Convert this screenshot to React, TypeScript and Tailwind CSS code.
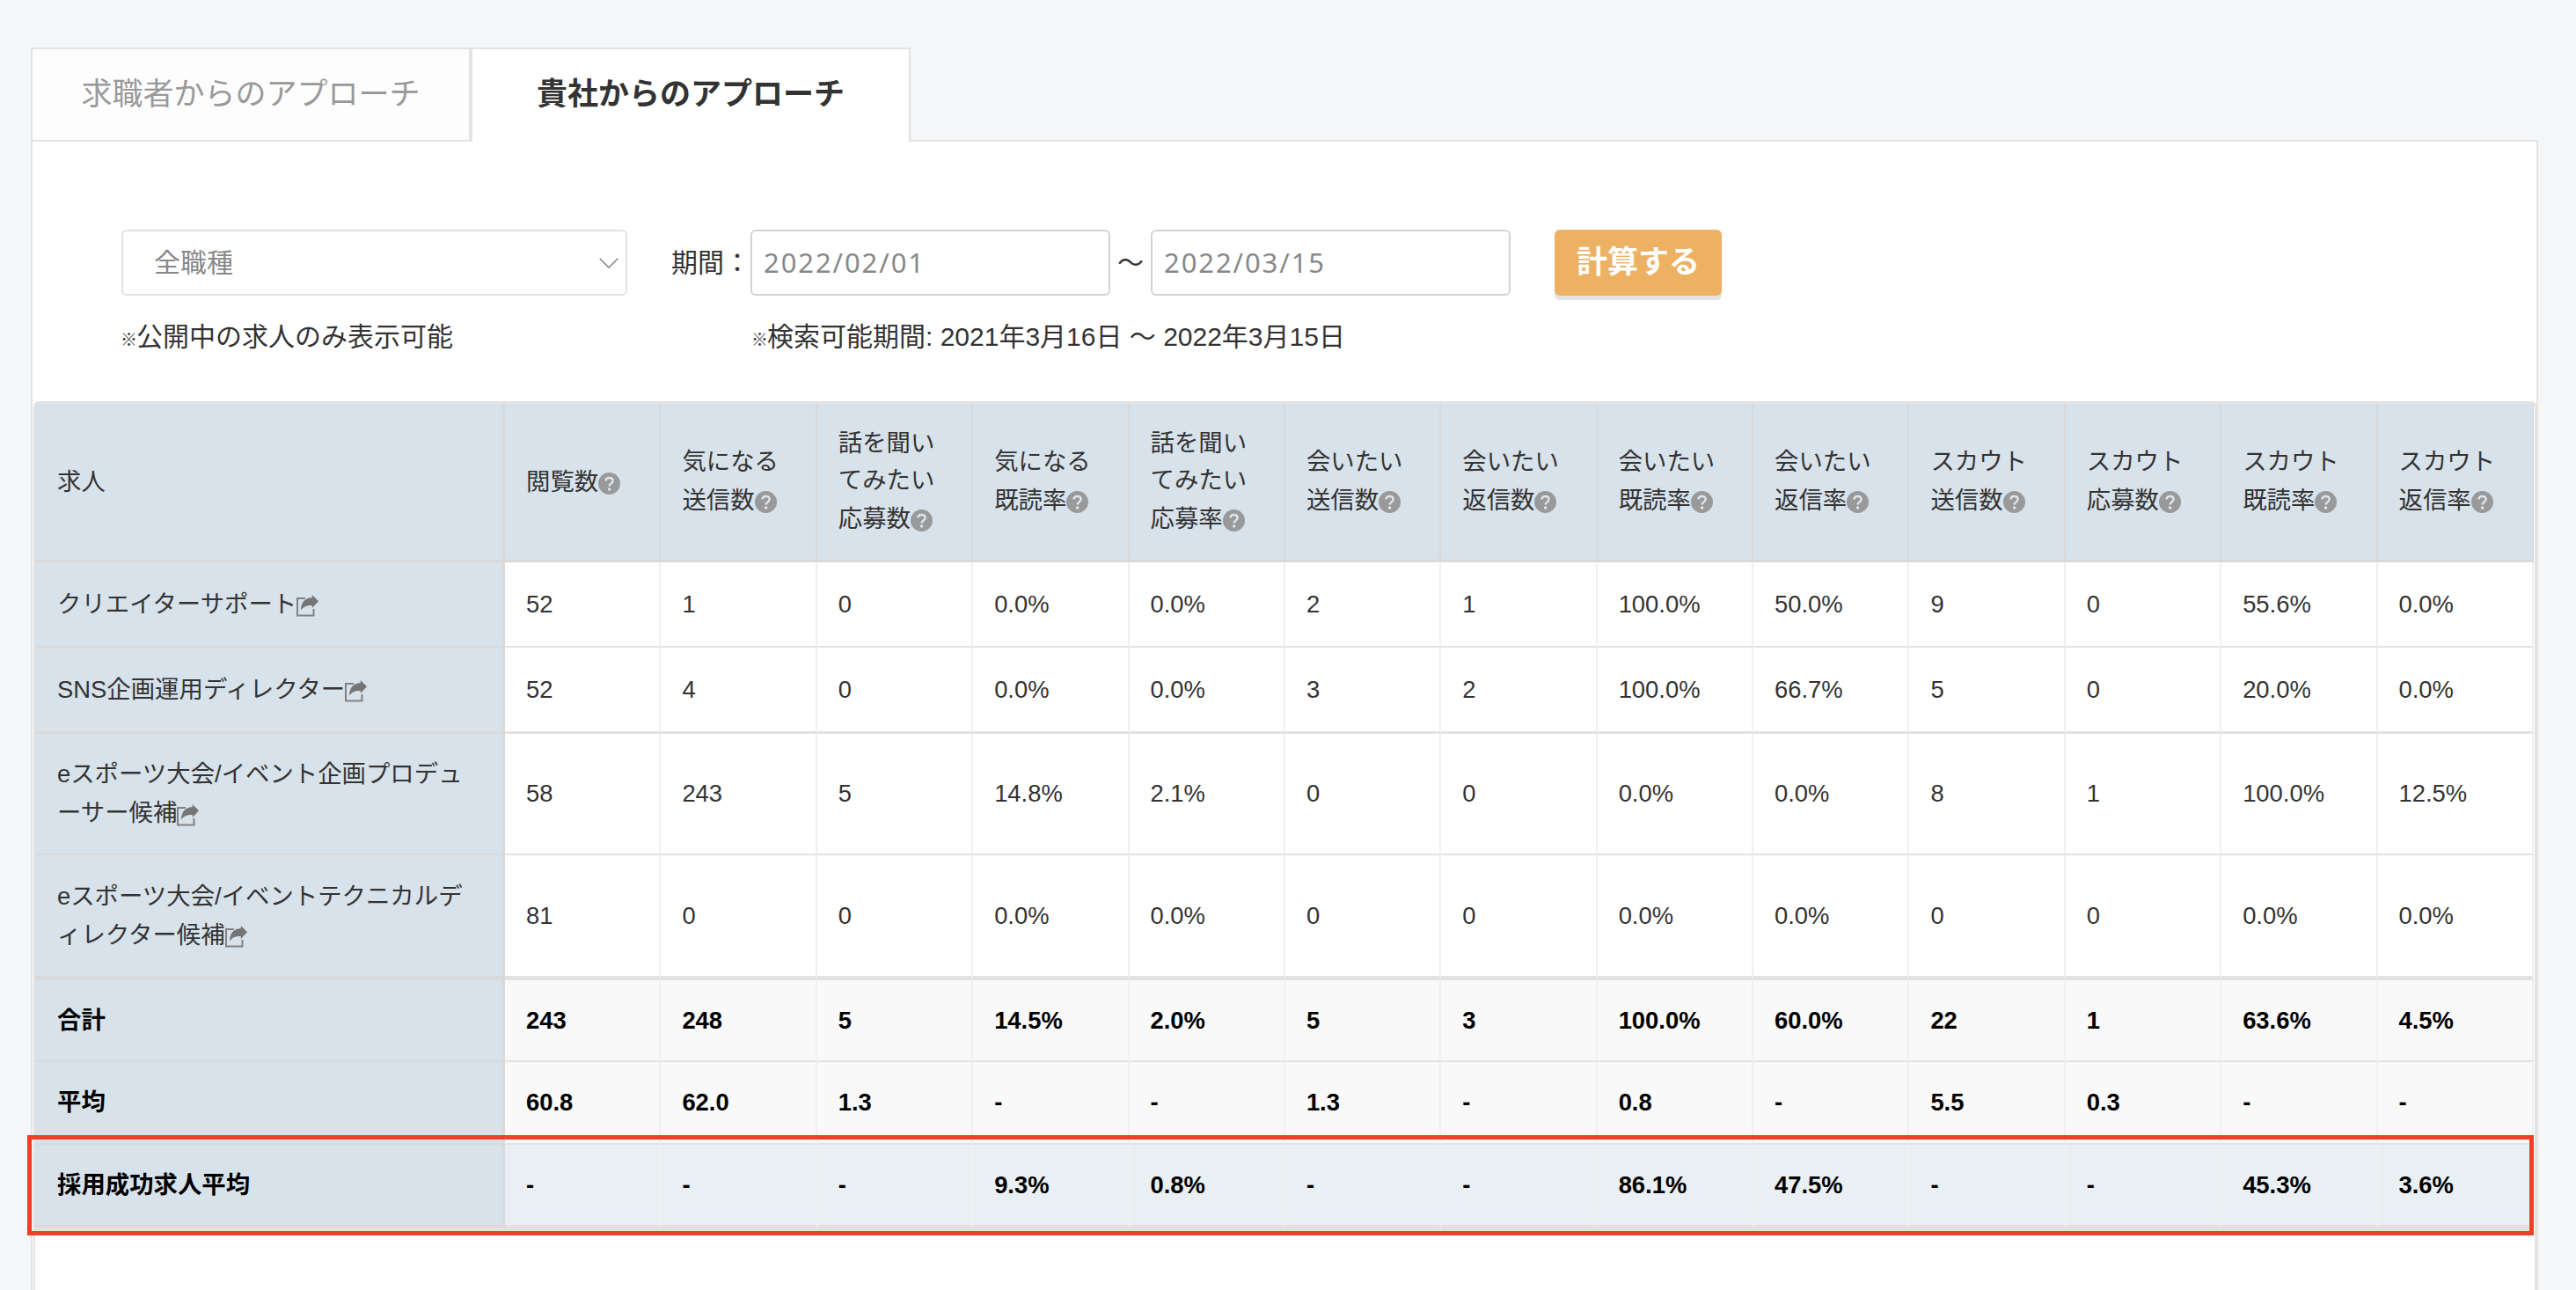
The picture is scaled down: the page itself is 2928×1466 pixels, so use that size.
type Row = {
  label: string[];
  values: string[];
  height: string;
};

const columns = [
  ["閲覧数"],
  ["気になる", "送信数"],
  ["話を聞い", "てみたい", "応募数"],
  ["気になる", "既読率"],
  ["話を聞い", "てみたい", "応募率"],
  ["会いたい", "送信数"],
  ["会いたい", "返信数"],
  ["会いたい", "既読率"],
  ["会いたい", "返信率"],
  ["スカウト", "送信数"],
  ["スカウト", "応募数"],
  ["スカウト", "既読率"],
  ["スカウト", "返信率"],
];

const jobs: Row[] = [
  {
    label: ["クリエイターサポート"],
    values: ["52", "1", "0", "0.0%", "0.0%", "2", "1", "100.0%", "50.0%", "9", "0", "55.6%", "0.0%"],
    height: "h-[97px] *:border-b-2",
  },
  {
    label: ["SNS企画運用ディレクター"],
    values: ["52", "4", "0", "0.0%", "0.0%", "3", "2", "100.0%", "66.7%", "5", "0", "20.0%", "0.0%"],
    height: "h-[98px] *:border-b-3",
  },
  {
    label: ["eスポーツ大会/イベント企画プロデュ", "ーサー候補"],
    values: ["58", "243", "5", "14.8%", "2.1%", "0", "0", "0.0%", "0.0%", "8", "1", "100.0%", "12.5%"],
    height: "h-[138px] *:border-b-2",
  },
  {
    label: ["eスポーツ大会/イベントテクニカルデ", "ィレクター候補"],
    values: ["81", "0", "0", "0.0%", "0.0%", "0", "0", "0.0%", "0.0%", "0", "0", "0.0%", "0.0%"],
    height: "h-[142px] *:border-b-5",
  },
];

const totals: Row[] = [
  {
    label: ["合計"],
    values: ["243", "248", "5", "14.5%", "2.0%", "5", "3", "100.0%", "60.0%", "22", "1", "63.6%", "4.5%"],
    height: "h-[93px] bg-[#f9f9f9] *:border-b-2",
  },
  {
    label: ["平均"],
    values: ["60.8", "62.0", "1.3", "-", "-", "1.3", "-", "0.8", "-", "5.5", "0.3", "-", "-"],
    height: "h-[94px] bg-[#f9f9f9] *:border-b-2",
  },
  {
    label: ["採用成功求人平均"],
    values: ["-", "-", "-", "9.3%", "0.8%", "-", "-", "86.1%", "47.5%", "-", "-", "45.3%", "3.6%"],
    height: "h-[94px] bg-[#eaeff3] *:border-b-3",
  },
];

function HelpIcon() {
  return (
    <svg viewBox="0 0 25 25" className="inline-block size-[25px] shrink-0 translate-y-[2px]">
      <circle cx="12.5" cy="12.5" r="12.5" fill="#999" />
      <path d="M8.6 9.6c0-2.3 1.7-3.7 4-3.7s4 1.4 4 3.5c0 2.9-3.9 3.1-3.9 6.2" fill="none" stroke="#dde5ec" strokeWidth="2.5" />
      <circle cx="12.6" cy="19" r="1.8" fill="#dde5ec" />
    </svg>
  );
}

function ShareIcon() {
  return (
    <svg viewBox="0 0 25 25" className="inline-block size-[25px] shrink-0 translate-y-[2px]">
      <path d="M10 4H1v19.500h18.500v-7.500" fill="none" stroke="#828282" strokeWidth="2" />
      <path d="M25 7.300 17.800 0v3C9.500 3.500 5 9 5 17.500c3-4.500 7-5.800 12.800-5.600v3.100z" fill="#757575" />
    </svg>
  );
}

function Note({ children }: { children: string }) {
  return (
    <p className="flex h-[44px] items-center text-[30px] leading-[44px] whitespace-pre">
      <span className="w-[18px] pt-[6px] text-[19px] leading-none font-black">※</span>
      {children}
    </p>
  );
}

function DateBox({ value }: { value: string }) {
  return (
    <div className="flex h-[75px] w-[409px] items-center rounded-md border-2 border-[#d3d3d3] pl-[13px] font-['Noto_Sans'] text-[31px] tracking-[1.9px] text-[#888]">
      {value}
    </div>
  );
}

function TableRow({ row, total }: { row: Row; total?: boolean }) {
  return (
    <tr className={`${row.height} ${total ? "font-bold text-black" : ""}`}>
      <th
        className={`border-r-3 border-[#d9d9d9] bg-[#d8e2ea] pl-[25px] text-left ${total ? "font-bold" : "font-normal"}`}
      >
        {row.label.map((line, i) => (
          <div key={line} className="flex items-center leading-[44px] whitespace-nowrap">
            {line}
            {!total && i === row.label.length - 1 && <ShareIcon />}
          </div>
        ))}
      </th>
      {row.values.map((value, i) => (
        <td key={i} className="border-r-2 border-r-[#f0f0f0] border-b-[#e2e2e2] pl-[24px]">
          {value}
        </td>
      ))}
    </tr>
  );
}

export default function App() {
  return (
    <main className="relative h-[1466px] w-[2928px] overflow-hidden bg-[#f5f6f8] pt-[54px] pl-[35px] font-['Liberation_Sans','Noto_Sans_CJK_JP',sans-serif] text-[27.4px] text-[#333]">
      <nav className="relative z-10 -mb-[2px] flex text-[35px]">
        <div className="flex h-[107px] w-[500px] items-center justify-center border-2 border-[#e3e3e3] bg-[#fdfdfd] pb-[1px] text-[#999]">
          求職者からのアプローチ
        </div>
        <div className="flex h-[107px] w-[500px] items-center justify-center border-2 border-b-0 border-[#e3e3e3] bg-white pb-[3px] font-bold">
          貴社からのアプローチ
        </div>
      </nav>

      <section className="h-[1310px] w-[2850px] border-2 border-[#e3e3e3] bg-white">
        <div className="flex pt-[100px] pl-[101px] text-[30px]">
          <div className="w-[715px]">
            <div className="flex h-[75px] w-[575px] items-center justify-between rounded-md border-2 border-[#e3e3e3] pr-[8px] pl-[35px] text-[#888]">
              全職種
              <svg viewBox="0 0 22 12" className="h-[12px] w-[22px]" fill="none" stroke="#888" strokeWidth="1.6">
                <path d="m.7.7 10.300 10.300L21.300.7" />
              </svg>
            </div>
            <div className="-ml-px pt-[25px]">
              <Note>公開中の求人のみ表示可能</Note>
            </div>
          </div>
          <div>
            <div className="-ml-[90px] flex items-center">
              <span className="w-[90px]">期間：</span>
              <DateBox value="2022/02/01" />
              <span className="w-[46px] text-center">～</span>
              <DateBox value="2022/03/15" />
              <button className="ml-[50px] h-[75px] w-[190px] rounded-md bg-[#edb163] pb-[1px] text-[35px] font-bold text-white shadow-[0_5px_0_#e3e3e3]">
                計算する
              </button>
            </div>
            <div className="pt-[25px] pl-px">
              <Note>検索可能期間: 2021年3月16日 ～ 2022年3月15日</Note>
            </div>
          </div>
        </div>

        <div className="mt-[51px] ml-px h-[1020px] w-[2845px] rounded-t-md border-x-2 border-t-3 border-[#e2e2e2]">
          <table className="w-[2840px] table-fixed border-separate border-spacing-0 border-b-4 border-[#e2e2e2]">
            <colgroup>
              <col className="w-[534px]" />
              {columns.map((_, i) => (
                <col key={i} />
              ))}
            </colgroup>
            <thead>
              <tr className="h-[180px] bg-[#d8e2ea] *:border-r-2 *:border-b-3 *:border-[#d9d9d9] *:text-left *:font-normal">
                <th className="border-r-3! pl-[25px]">求人</th>
                {columns.map((lines, i) => (
                  <th key={i} className="pl-[24px]">
                    {lines.map((line, n) =>
                      n === lines.length - 1 ? (
                        <div key={n} className="flex items-center leading-[46px] whitespace-nowrap">
                          {line}
                          <HelpIcon />
                        </div>
                      ) : (
                        <div key={n} className="leading-[42px] whitespace-nowrap">
                          {line}
                        </div>
                      ),
                    )}
                  </th>
                ))}
              </tr>
            </thead>
            <tbody>
              {jobs.map((row) => (
                <TableRow key={row.label[0]} row={row} />
              ))}
              {totals.map((row) => (
                <TableRow key={row.label[0]} row={row} total />
              ))}
            </tbody>
          </table>
        </div>
      </section>

      {/* highlight around the benchmark row */}
      <div className="absolute top-[1290px] left-[31px] z-20 h-[114px] w-[2849px] border-5 border-[#ee4026]" />
    </main>
  );
}
